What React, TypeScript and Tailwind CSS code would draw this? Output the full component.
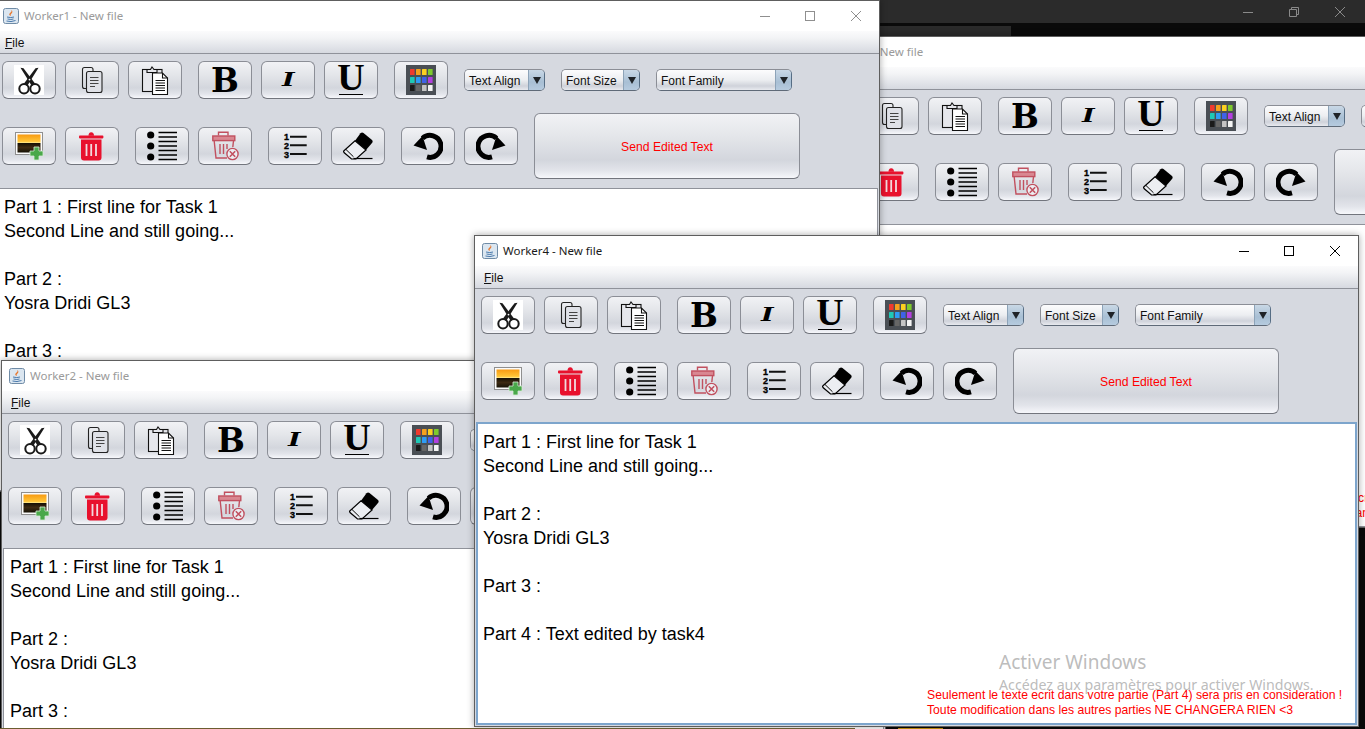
import React from 'react';

const arial = '[font-family:"Liberation_Sans",Arial,sans-serif]';

const ICON = 'block h-[30px] w-[30px] shrink-0';

function ScissorsIcon() {
  return (
    <svg viewBox="0 0 30 30" className={`${ICON} bg-white`}>
      <path d="M6.5 2.8 L9.5 3.2 L21 18.5 L17.8 21 Z" fill="#1a1a1a" />
      <path d="M24.5 2.8 L21.5 3.2 L10 18.5 L13.2 21 Z" fill="#1a1a1a" />
      <circle cx="10" cy="23.8" r="4.7" fill="none" stroke="#1a1a1a" strokeWidth="2" />
      <circle cx="21" cy="23.8" r="4.7" fill="none" stroke="#1a1a1a" strokeWidth="2" />
      <circle cx="15.5" cy="14.6" r="0.9" fill="#fff" />
    </svg>
  );
}

function CopyIcon() {
  return (
    <svg viewBox="0 0 30 30" className={ICON} fill="none" stroke="#222" strokeWidth="1.1">
      <path d="M9 23.5 H7.5 Q5.5 23.5 5.5 21.5 V4.5 Q5.5 2.5 7.5 2.5 H14 Q16 2.5 16 4.5 V6.5" />
      <rect x="9.5" y="6.5" width="15.5" height="21" rx="2" fill="#dfe1e7" />
      <path d="M13 12.5 H21.5 M13 15.5 H21.5 M13 18.5 H21.5 M13 21.5 H18" stroke="#444" />
    </svg>
  );
}

function PasteIcon() {
  return (
    <svg viewBox="0 0 30 30" className={ICON} fill="none" stroke="#111" strokeWidth="1.1">
      <rect x="2.5" y="4.5" width="19.5" height="22" fill="#e6e7ec" />
      <path d="M7 7.5 V4.5 H10.5 L12 2 L14 4.5 H17 V7.5 Z" fill="#e6e7ec" />
      <path d="M12.5 8 H22.5 L27.5 13 V29.5 H12.5 Z" fill="#fff" />
      <path d="M22.5 8 V13 H27.5" />
      <path d="M15.5 15.5 H25 M15.5 18 H25 M15.5 20.5 H25 M15.5 23 H25 M15.5 25.5 H25" strokeWidth="1" />
    </svg>
  );
}

function ImageIcon() {
  return (
    <svg viewBox="0 0 30 30" className={ICON}>
      <defs>
        <linearGradient id="sky" x1="0" y1="0" x2="0" y2="1">
          <stop offset="0" stopColor="#f79a12" />
          <stop offset="0.38" stopColor="#ffc437" />
          <stop offset="0.46" stopColor="#ffe98a" />
          <stop offset="0.5" stopColor="#181206" />
          <stop offset="0.72" stopColor="#3d2a12" />
          <stop offset="1" stopColor="#171307" />
        </linearGradient>
      </defs>
      <rect x="1.5" y="1.5" width="27" height="22" fill="#fbfbfb" stroke="#8f8f8f" />
      <rect x="3.5" y="3.5" width="23" height="18" fill="url(#sky)" />
      <path d="M20 16 H25 V20 H29 V25 H25 V29 H20 V25 H16 V20 H20 Z" fill="#4aa84a" stroke="#d8ecd8" strokeWidth="0.8" />
    </svg>
  );
}

function TrashIcon() {
  return (
    <svg viewBox="0 0 30 30" className={ICON}>
      <path d="M11.5 4.8 Q11.5 1.2 14.2 1.2 Q17 1.2 17 4.8 Z" fill="#e8112d" />
      <rect x="2" y="4.6" width="24.4" height="2.8" rx="0.8" fill="#e8112d" />
      <path d="M4 8.5 H24.5 V26.5 Q24.5 29.5 21.5 29.5 H7 Q4 29.5 4 26.5 Z" fill="#e8112d" />
      <path d="M9.5 13 V25 M14.2 13 V25 M19 13 V25" stroke="#f2d9de" strokeWidth="1.8" />
    </svg>
  );
}

function BulletIcon() {
  return (
    <svg viewBox="0 0 30 30" className={ICON}>
      <circle cx="3.7" cy="4" r="3.6" fill="#000" />
      <circle cx="3.7" cy="15" r="3.6" fill="#000" />
      <circle cx="3.7" cy="26" r="3.6" fill="#000" />
      <path d="M11.5 1.5 H30 M11.5 6 H30 M11.5 10.5 H30 M11.5 15 H30 M11.5 19.5 H30 M11.5 24 H30 M11.5 28.5 H30" stroke="#000" strokeWidth="1.7" />
    </svg>
  );
}

function DeleteIcon() {
  return (
    <svg viewBox="0 0 30 30" className={ICON} fill="none" stroke="#c1505f" strokeWidth="1.4">
      <path d="M8.5 4.5 V1.2 H18 V4.5" />
      <rect x="2.8" y="5" width="22" height="4.6" fill="#d98791" />
      <path d="M4.2 10 L6 27 H17" />
      <path d="M23.5 10 L22.8 16" />
      <path d="M10 13 V23 M13.5 13 V23 M17 13 V18" />
      <circle cx="22.5" cy="23" r="5.6" fill="#eceef2" />
      <path d="M19.8 20.3 L25.2 25.7 M25.2 20.3 L19.8 25.7" strokeWidth="1.6" />
    </svg>
  );
}

function NumberIcon() {
  return (
    <svg viewBox="0 0 30 30" className={ICON}>
      <g fontFamily="Liberation Sans, Arial, sans-serif" fontWeight="700" fontSize="9" fill="#000" stroke="#000" strokeWidth="0.35" textAnchor="middle">
        <text x="6.5" y="8.5">1</text>
        <text x="6.5" y="17.5">2</text>
        <text x="6.5" y="26.5">3</text>
      </g>
      <path d="M10 5.7 H26.7 M10 14.3 H26.7 M10 23 H26.7" stroke="#111" strokeWidth="2" />
    </svg>
  );
}

function EraserIcon() {
  return (
    <svg viewBox="0 0 30 30" className={ICON}>
      <path d="M17.5 2.2 Q19 1 20.5 2 L29 9 Q30.3 10.4 29 12 L23 19 L12 9.8 Z" fill="#000" />
      <path d="M12 9.8 L23 19 L13 28 H8.5 L1 21.5 Q0.2 20.5 1 19.8 Z" fill="#eceef2" stroke="#000" strokeWidth="1.2" />
      <path d="M3 18.5 L10.5 25.8" stroke="#000" strokeWidth="1" />
      <path d="M10.5 27.5 H29.5" stroke="#000" strokeWidth="1.2" />
    </svg>
  );
}

function UndoIcon({ flip = false }: { flip?: boolean }) {
  return (
    <svg viewBox="0 0 30 30" className={`${ICON} ${flip ? '-scale-x-100' : ''}`}>
      <path d="M14 25.9 A11 11 0 1 0 9.5 7.3" fill="none" stroke="#000" strokeWidth="5" />
      <path d="M0.5 14.5 L9.5 5 L14 19 Z" fill="#000" />
    </svg>
  );
}

const swatches = [
  '#f03a2e', '#f5a11d', '#fdd01f', '#7ecb2c',
  '#1fc9b6', '#2f9cf5', '#3f62e8', '#b33fe0',
  '#1a1a1a', '#666666', '#c4c4c4', '#f4f4f4',
];

function PaletteIcon() {
  return (
    <svg viewBox="0 0 30 30" className={ICON}>
      <rect width="30" height="30" fill="#4a4f55" />
      {swatches.map((c, i) => (
        <rect key={c} x={4 + (i % 4) * 6} y={4 + Math.floor(i / 4) * 8} width="4.6" height="6" rx="0.5" fill={c} />
      ))}
    </svg>
  );
}

function JavaIcon() {
  return (
    <svg viewBox="0 0 16 16" className="block h-4 w-4 shrink-0">
      <rect x="0.5" y="0.5" width="15" height="15" rx="2" fill="#dbe6f0" stroke="#6f8ba6" />
      <path d="M8.5 2 Q10.5 4 8 6 Q7 7 8 8 Q5 7 7 5 Q9 4 8.5 2 Z" fill="#e8762b" />
      <path d="M4 9 Q8 10.2 11 9 M4.5 11 Q8 12 10.5 11 M3.5 13 Q8 14.4 12.5 12.5" fill="none" stroke="#3b6ea5" strokeWidth="0.9" />
    </svg>
  );
}

const btnClass =
  'flex shrink-0 items-center justify-center rounded-[6px] border border-[#8b8e96] border-b-[#72757d] bg-[linear-gradient(180deg,#f1f2f5_0%,#e4e6ea_35%,#d3d6dd_72%,#e2e4ea_88%,#f6f7fb_100%)]';

function ToolButton({ children, className = '' }: { children: React.ReactNode; className?: string }) {
  return <div className={`${btnClass} h-[38px] w-[54px] ${className}`}>{children}</div>;
}

function Combo({ label, width, gap }: { label: string; width: string; gap: string }) {
  return (
    <div className={`flex h-[22px] shrink-0 overflow-hidden rounded-[5px] border border-[#8b8e96] border-r-[#566d84] border-b-[#5f6a78] text-[12px] text-[#111] ${arial} ${width} ${gap}`}>
      <div className="flex flex-1 items-center bg-[linear-gradient(180deg,#fcfcfd_0%,#eceef1_50%,#cfd2da_80%,#e8eaef_100%)] pl-[4px] pt-[2px]">{label}</div>
      <div className="flex w-[16px] items-center justify-center border-l border-[#8da3b8] bg-[linear-gradient(180deg,#c9d8e6_0%,#a8bfd4_60%,#b6cbdf_100%)]">
        <span className="block h-0 w-0 border-x-[4px] border-t-[7px] border-x-transparent border-t-[#1f2328]" />
      </div>
    </div>
  );
}

function Window({ title, active = false, className }: { title: string; active?: boolean; className: string }) {
  const ctrl = active ? 'text-black' : 'text-[#8f8f8f]';
  return (
    <div className={`absolute flex h-[492px] w-[885px] flex-col border border-[#5e5e5e] bg-[#d6d9e0] shadow-[0_0_7px_rgba(0,0,0,0.35)] ${className}`}>
      <div className="flex h-[30px] shrink-0 items-center bg-white pl-[7px]">
        <JavaIcon />
        <span className={`ml-[5px] [font-family:"Noto_Sans",sans-serif] text-[11.5px] ${active ? 'text-[#1a1a1a]' : 'text-[#9a9a9a]'}`}>{title}</span>
        <div className={`ml-auto flex items-center ${ctrl}`}>
          <svg viewBox="0 0 10 10" className="h-[10px] w-[10px]"><path d="M0 5.5 H10" stroke="currentColor" /></svg>
          <svg viewBox="0 0 10 10" className="ml-[35px] h-[10px] w-[10px]"><rect x="0.5" y="0.5" width="9" height="9" fill="none" stroke="currentColor" /></svg>
          <svg viewBox="0 0 10 10" className="ml-[36px] mr-[18px] h-[10px] w-[10px]"><path d="M0 0 L10 10 M10 0 L0 10" stroke="currentColor" /></svg>
        </div>
      </div>
      <div className={`flex h-[23px] shrink-0 items-center border-b border-[#8f929a] bg-[linear-gradient(180deg,#fbfbfc_0%,#f3f4f6_30%,#d6d9e0_100%)] pl-[9px] pt-[2px] text-[12px] text-[#111] ${arial}`}>
        <span className="underline decoration-[1px] underline-offset-1 [text-decoration-skip-ink:none]">F</span>ile
      </div>
      <div className="flex shrink-0 flex-col pl-[6px] pt-[7px] pb-[8px]">
        <div className="flex h-[38px] items-center">
          <ToolButton><ScissorsIcon /></ToolButton>
          <ToolButton className="ml-[9px]"><CopyIcon /></ToolButton>
          <ToolButton className="ml-[9px]"><PasteIcon /></ToolButton>
          <ToolButton className="ml-[16px]">
            <span className='[font-family:"DejaVu_Serif",serif] text-[33px] leading-none font-bold text-black'>B</span>
          </ToolButton>
          <ToolButton className="ml-[9px]">
            <span className='scale-x-[1.5] [font-family:"DejaVu_Serif",serif] text-[18px] leading-none font-bold italic text-black'>I</span>
          </ToolButton>
          <ToolButton className="relative ml-[9px]">
            <span className='[font-family:"Liberation_Serif",serif] -mt-[6px] text-[38px] leading-none font-bold text-black'>U</span>
            <span className="absolute bottom-[3px] left-[14px] h-[1px] w-[24px] bg-black" />
          </ToolButton>
          <ToolButton className="ml-[16px]"><PaletteIcon /></ToolButton>
          <Combo label="Text Align" width="w-[81px]" gap="ml-[16px]" />
          <Combo label="Font Size" width="w-[79px]" gap="ml-[16px]" />
          <Combo label="Font Family" width="w-[136px]" gap="ml-[16px]" />
        </div>
        <div className="mt-[14px] flex h-[66px] items-center">
          <ToolButton><ImageIcon /></ToolButton>
          <ToolButton className="ml-[9px]"><TrashIcon /></ToolButton>
          <ToolButton className="ml-[16px]"><BulletIcon /></ToolButton>
          <ToolButton className="ml-[9px]"><DeleteIcon /></ToolButton>
          <ToolButton className="ml-[16px]"><NumberIcon /></ToolButton>
          <ToolButton className="ml-[9px]"><EraserIcon /></ToolButton>
          <ToolButton className="ml-[16px]"><UndoIcon /></ToolButton>
          <ToolButton className="ml-[9px]"><UndoIcon flip /></ToolButton>
          <div className={`${btnClass} ml-[16px] h-[66px] w-[266px] pt-[2px] text-[12.2px] text-[#ff0000] ${arial}`}>Send Edited Text</div>
        </div>
      </div>
      <div className={`relative mx-[1px] flex-1 bg-white text-[18px] leading-[24px] text-black ${arial} ${active ? 'mb-[1px] border-2 border-[#7da5cc] pl-[5px] pt-[6px]' : 'mt-[1px] border border-[#8f929a] pl-[6px] pt-[6px]'}`}>
        <p>Part 1 : First line for Task 1</p>
        <p>Second Line and still going...</p>
        <p className="mt-[24px]">Part 2 :</p>
        <p>Yosra Dridi GL3</p>
        <p className="mt-[24px]">Part 3 :</p>
        {active && <p className="mt-[24px]">Part 4 : Text edited by task4</p>}
        <div className="absolute bottom-[5px] left-[449px] whitespace-nowrap text-[12.2px] leading-[15px] text-[#ff0000]">
          <p>Seulement le texte ecrit dans votre partie (Part 4) sera pris en consideration !</p>
          <p>Toute modification dans les autres parties NE CHANGERA RIEN &lt;3</p>
        </div>
      </div>
    </div>
  );
}

export default function App() {
  return (
    <div className="relative h-[729px] w-[1365px] overflow-hidden bg-[#0a0a0a]">
      {/* IDE behind the windows */}
      <div className="flex h-[23px] items-center justify-end bg-[#2b2b2b] text-[#8a8a8a]">
        <svg viewBox="0 0 10 10" className="h-[10px] w-[10px]"><path d="M0 5.5 H10" stroke="currentColor" /></svg>
        <svg viewBox="0 0 10 10" className="ml-[36px] h-[10px] w-[10px]"><path d="M2.5 2 V0.5 H9.5 V7.5 H7.5 M0.5 2.5 H7.5 V9.5 H0.5 Z" fill="none" stroke="currentColor" /></svg>
        <svg viewBox="0 0 10 10" className="ml-[36px] mr-[20px] h-[10px] w-[10px]"><path d="M0 0 L10 10 M10 0 L0 10" stroke="currentColor" /></svg>
      </div>
      <div className="absolute left-[880px] top-[26px] h-[10px] w-[131px] bg-[#2a2a2a]" />

      <Window title="Worker3 - New file" className="left-[795px] top-[36px]" />
      <Window title="Worker1 - New file" className="left-[-5px] top-0" />
      <Window title="Worker2 - New file" className="left-[1px] top-[360px]" />
      <Window title="Worker4 - New file" active className="left-[474px] top-[235px]" />

      {/* wallpaper peeking out under the windows */}
      <div className="absolute inset-x-0 bottom-0 flex h-[1px]">
        <div className="w-[855px] bg-[#6b5c30]" />
        <div className="ml-[43px] w-[45px] bg-[#b8860b]" />
      </div>

      {/* activation watermark */}
      <div className='pointer-events-none absolute left-[999px] top-[649px] whitespace-nowrap [font-family:"Noto_Sans",sans-serif] text-[#b4b4b4]/90'>
        <p className="text-[19px] leading-[26px]">Activer Windows</p>
        <p className="mt-[1px] text-[14.2px] leading-[18px]">Accédez aux paramètres pour activer Windows.</p>
      </div>
    </div>
  );
}
